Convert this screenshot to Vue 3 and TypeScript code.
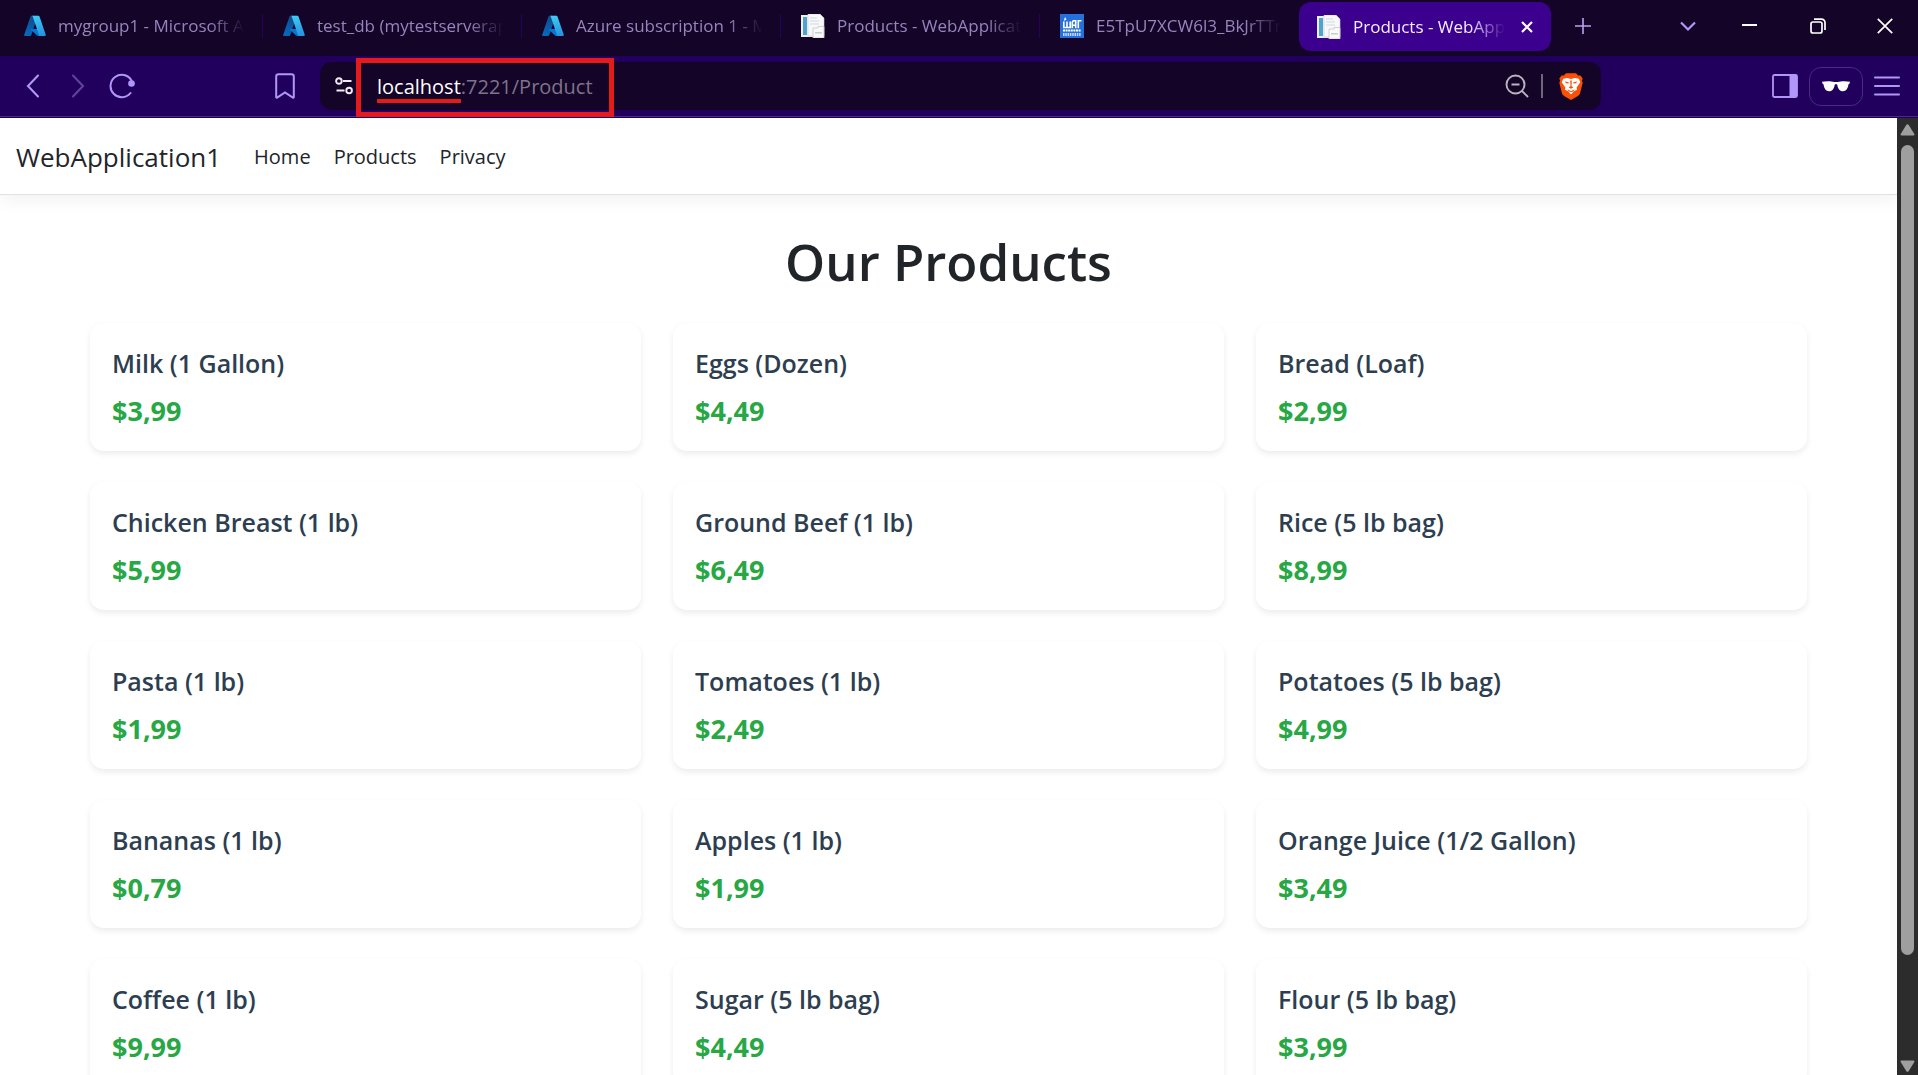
<script setup lang="ts">
interface Tab {
  title: string
  icon: 'azure' | 'doc' | 'step'
  active?: boolean
}

interface Product {
  name: string
  price: string
}

const tabs: Tab[] = [
  { title: 'mygroup1 - Microsoft A', icon: 'azure' },
  { title: 'test_db (mytestserverap', icon: 'azure' },
  { title: 'Azure subscription 1 - M', icon: 'azure' },
  { title: 'Products - WebApplicat', icon: 'doc' },
  { title: 'E5TpU7XCW6l3_BkJrTTr', icon: 'step' },
  { title: 'Products - WebApp', icon: 'doc', active: true },
]

const links: string[] = ['Home', 'Products', 'Privacy']

const products: Product[] = [
  { name: 'Milk (1 Gallon)', price: '$3,99' },
  { name: 'Eggs (Dozen)', price: '$4,49' },
  { name: 'Bread (Loaf)', price: '$2,99' },
  { name: 'Chicken Breast (1 lb)', price: '$5,99' },
  { name: 'Ground Beef (1 lb)', price: '$6,49' },
  { name: 'Rice (5 lb bag)', price: '$8,99' },
  { name: 'Pasta (1 lb)', price: '$1,99' },
  { name: 'Tomatoes (1 lb)', price: '$2,49' },
  { name: 'Potatoes (5 lb bag)', price: '$4,99' },
  { name: 'Bananas (1 lb)', price: '$0,79' },
  { name: 'Apples (1 lb)', price: '$1,99' },
  { name: 'Orange Juice (1/2 Gallon)', price: '$3,49' },
  { name: 'Coffee (1 lb)', price: '$9,99' },
  { name: 'Sugar (5 lb bag)', price: '$4,49' },
  { name: 'Flour (5 lb bag)', price: '$3,99' },
]
</script>

<template>
  <div class="window">
    <div class="tabstrip">
      <div v-for="(tab, i) in tabs" :key="i" class="tab" :class="{ active: tab.active }">
        <svg v-if="tab.icon === 'azure'" class="favicon" viewBox="0 0 22 22" aria-hidden="true">
          <defs>
            <linearGradient :id="'azl' + i" x1="0.6" y1="0" x2="0.3" y2="1">
              <stop offset="0" stop-color="#114a8b" />
              <stop offset="1" stop-color="#0669bc" />
            </linearGradient>
            <linearGradient :id="'azr' + i" x1="0.4" y1="0" x2="0.6" y2="1">
              <stop offset="0" stop-color="#3ccbf4" />
              <stop offset="1" stop-color="#2892df" />
            </linearGradient>
          </defs>
          <path d="M7.5 .8h6.3L7.3 20.1a1.1 1.1 0 0 1-1 .8H1.300a1 1 0 0 1-1-1.400L6.500 1.500a1.100 1.100 0 0 1 1-.700z" :fill="`url(#azl${i})`" />
          <path d="M16.500 13.900H7.100a.5.500 0 0 0-.3.800l6.200 5.700a1 1 0 0 0 .7.300h5.200z" fill="#0078d4" />
          <path d="M15.500 1.500a1.100 1.100 0 0 0-1-.700H7.700a1.100 1.100 0 0 1 1 .7l6.100 18a1.100 1.100 0 0 1-1 1.400h6.900a1.100 1.100 0 0 0 1-1.400z" :fill="`url(#azr${i})`" />
        </svg>
        <svg v-else-if="tab.icon === 'doc'" class="favicon wide" viewBox="0 0 24 24" aria-hidden="true">
          <path d="M0 1h18v22H0z" fill="#eef1f3" />
          <path d="M2 3h4v18H2z" fill="#4fa3cf" />
          <path d="M7 0h12l4 4v18H7z" fill="#f7f8f9" stroke="#c9cdd1" stroke-width=".6" />
          <path d="M9 4h7M9 7h9M9 10h9" stroke="#d3dae0" stroke-width="1" />
          <path d="M12 14h5v-1.500h6V24H12z" fill="#fafafa" stroke="#c6c6c6" stroke-width=".8" />
          <path d="M14 18h7v1.500h-7z" fill="#c8ced3" />
        </svg>
        <svg v-else class="favicon wide" viewBox="0 0 24 24" aria-hidden="true">
          <path d="M0 0h24v24H0z" fill="#2670dc" />
          <path d="M3.800 7.500v6h6.400v-6M7 7.500v6M12.300 14.300V8.300l1-1.500h2.400v7.500M12.300 11.300h3.400M18.300 14.300V6.800h3.200" fill="none" stroke="#fff" stroke-width="1.600" />
          <path d="M5 3l1.500 2.500L3.800 7z" fill="#fff" />
          <path d="M3 16.500h18" stroke="#fff" stroke-width="2" stroke-dasharray="2 .6" />
          <path d="M3 20.500h18" stroke="#c4dbf8" stroke-width="3" stroke-dasharray="1.500 .8" />
        </svg>
        <span class="tab-title">{{ tab.title }}</span>
        <button v-if="tab.active" class="plain tab-close" aria-label="Close tab">
          <svg width="12" height="12" viewBox="0 0 12 12"><path d="M1 1l10 10M11 1L1 11" stroke="#fff" stroke-width="2.200" /></svg>
        </button>
      </div>
      <button class="plain new-tab" aria-label="New tab">
        <svg width="16" height="16" viewBox="0 0 16 16"><path d="M8 0v16M0 8h16" stroke="#b9a3f2" stroke-width="1.600" /></svg>
      </button>
      <div class="window-controls">
        <button class="plain" aria-label="Search tabs">
          <svg width="16" height="16" viewBox="0 0 16 16"><path d="M1 4.500l7 7 7-7" fill="none" stroke="#b196fa" stroke-width="2.200" /></svg>
        </button>
        <button class="plain" aria-label="Minimize">
          <svg width="16" height="16" viewBox="0 0 16 16"><path d="M0 7h15" stroke="#fff" stroke-width="2" /></svg>
        </button>
        <button class="plain" aria-label="Restore">
          <svg width="16" height="16" viewBox="0 0 16 16" fill="none" stroke="#fff" stroke-width="1.700"><rect x="1" y="4" width="11" height="11" rx="2" /><path d="M4 1.200h7.500a3.500 3.500 0 0 1 3.500 3.500V12" /></svg>
        </button>
        <button class="plain" aria-label="Close window">
          <svg width="16" height="16" viewBox="0 0 16 16"><path d="M.8.8l14.400 14.400M15.200.8L.8 15.200" stroke="#fff" stroke-width="1.700" /></svg>
        </button>
      </div>
    </div>

    <div class="toolbar">
      <div class="nav-buttons">
        <button class="plain back" aria-label="Back">
          <svg width="14" height="24" viewBox="0 0 14 24"><path d="M12 1.500L2 12l10 10.500" fill="none" stroke="#b196fa" stroke-width="2.100" stroke-linecap="round" /></svg>
        </button>
        <button class="plain forward" aria-label="Forward">
          <svg width="14" height="24" viewBox="0 0 14 24"><path d="M2 1.500L12 12 2 22.500" fill="none" stroke="#62409e" stroke-width="2.100" stroke-linecap="round" /></svg>
        </button>
        <button class="plain" aria-label="Reload">
          <svg width="26" height="26" viewBox="0 0 26 26"><path d="M21.500 20a11.200 11.200 0 1 1 1-12.500" fill="none" stroke="#b196fa" stroke-width="2" stroke-linecap="round" /><circle cx="22.500" cy="10.500" r="3.300" fill="#b196fa" /></svg>
        </button>
      </div>
      <button class="plain bookmark" aria-label="Bookmark this page">
        <svg width="20" height="26" viewBox="0 0 20 26"><path d="M3.500 1.200h13a2.300 2.300 0 0 1 2.300 2.300v20.600c0 .6-.4.800-.9.500L10 19.500l-7.900 5.100c-.5.300-.9.100-.9-.5V3.500a2.300 2.300 0 0 1 2.300-2.300z" fill="none" stroke="#b196fa" stroke-width="2" /></svg>
      </button>
      <div class="omnibox">
        <button class="plain site-info" aria-label="Site information">
          <svg width="18" height="18" viewBox="0 0 18 18" fill="none" stroke="#f1edf7" stroke-width="1.900"><circle cx="3.900" cy="4" r="2.800" /><path d="M8 4h8.500M1.500 13.500h8" /><circle cx="14.100" cy="13.500" r="2.800" /></svg>
        </button>
        <div class="address">
          <label class="host" for="address">localhost</label>
          <input id="address" class="path" type="text" value=":7221/Product" />
        </div>
        <div class="omnibox-tools">
          <button class="plain" aria-label="Zoom">
            <svg width="24" height="24" viewBox="0 0 24 24" fill="none" stroke="#b9b4bf" stroke-width="1.900"><circle cx="10.500" cy="10.500" r="9" /><path d="M6.500 10.500h8M17 17l6 6" /></svg>
          </button>
          <span class="divider"></span>
          <button class="plain" aria-label="Brave Shields">
            <svg width="24" height="27" viewBox="0 0 24 27">
              <path d="M7 .3h10l2.200 2.300 2.300-.2 2.200 3.200-.8 2.200.8 2-2.600 10.200c-.4 1.400-1 2.100-2.200 3L12 27l-6.900-4c-1.200-.9-1.800-1.600-2.200-3L.3 9.800l.8-2-.8-2.200 2.200-3.200 2.300.2z" fill="#fb5006" />
              <path d="M4.200 5.800l4-.8 3.800.9 3.800-.9 4 .8 1.500 3.400-3.800 5.500.6 2-3.200 1.500L12 21.500l-2.900-3.300L5.900 16.700l.6-2L2.700 9.200z" fill="#fff" />
              <path d="M5.800 8.600l4 .7-.4 1.100-2.400-.1zM18.200 8.600l-4 .7.400 1.100 2.400-.1zM11.200 7.500h1.600l-.3 5.500 1.800 1.400-2.300 1.400-2.300-1.400 1.800-1.400zM8.500 16.300l3.500 1.900 3.500-1.900-1 1.900-2.500 1-2.500-1z" fill="#fb5006" />
            </svg>
          </button>
        </div>
      </div>
      <div class="side-tools">
        <button class="plain" aria-label="Side panel">
          <svg width="26" height="24" viewBox="0 0 26 24"><rect x="1" y="1" width="24" height="22" rx="1.500" fill="none" stroke="#b196fa" stroke-width="1.800" /><path d="M17.500 1H25v22h-7.500z" fill="#b196fa" /></svg>
        </button>
        <button class="plain private" aria-label="Private window">
          <svg width="28" height="11" viewBox="0 0 28 11"><path d="M0 .8C4-.1 9 0 12.200 1h3.600C19 0 24-.1 28 .8l-.7 2.200-.8.300c-.5 3.200-1.300 5-3 6.300-2 1-4.500.8-6-.7-1.300-1.500-2-3.200-2.200-5.200-.5-.5-2.100-.5-2.600 0-.2 2-.9 3.700-2.200 5.200-1.500 1.500-4 1.700-6 .7-1.700-1.300-2.500-3.100-3-6.300L.7 3z" fill="#fff" /></svg>
        </button>
        <button class="plain" aria-label="Menu">
          <svg width="26" height="20" viewBox="0 0 26 20"><path d="M1 1.500h24M1 10h24M1 18.500h24" stroke="#b196fa" stroke-width="2" stroke-linecap="round" /></svg>
        </button>
      </div>
    </div>

    <div class="viewport">
      <div class="page">
        <header class="navbar">
          <a class="brand" href="#">WebApplication1</a>
          <nav>
            <a v-for="link in links" :key="link" href="#">{{ link }}</a>
          </nav>
        </header>
        <main>
          <h1>Our Products</h1>
          <div class="grid">
            <article v-for="product in products" :key="product.name" class="card">
              <h2>{{ product.name }}</h2>
              <p>{{ product.price }}</p>
            </article>
          </div>
        </main>
      </div>
      <div class="scrollbar" aria-hidden="true">
        <svg width="15" height="12" viewBox="0 0 15 12"><path d="M1.500 11.500h12c.9 0 1.200-.8.8-1.500L8.600.8c-.5-.8-1.700-.8-2.200 0L.7 10c-.4.700-.1 1.500.8 1.500z" fill="#9f9f9f" /></svg>
        <div class="track"><div class="thumb"></div></div>
        <svg width="15" height="12" viewBox="0 0 15 12"><path d="M1.500.5h12c.9 0 1.200.8.800 1.500l-5.700 9.200c-.5.800-1.700.8-2.200 0L.7 2C.3 1.300.6.5 1.500.5z" fill="#9f9f9f" /></svg>
      </div>
    </div>
  </div>
</template>

<style>
body {
  margin: 0;
  overflow: hidden;
}
</style>

<style scoped>
.window {
  display: flex;
  flex-direction: column;
  height: 100vh;
  font-family: "Open Sans", "Noto Sans", sans-serif;
  background: #fff;
}

.window * {
  box-sizing: border-box;
}

svg {
  display: block;
  flex: none;
}

.plain {
  display: flex;
  align-items: center;
  justify-content: center;
  flex: none;
  margin: 0;
  padding: 0;
  border: 0;
  background: none;
}

/* Tab strip */
.tabstrip {
  display: flex;
  flex: none;
  height: 56px;
  padding-left: 4px;
  background: #140427;
}

.tab {
  display: flex;
  align-items: center;
  gap: 12px;
  flex: 0 1 259px;
  min-width: 0;
  height: 52px;
  padding: 0 14px 0 20px;
  color: #9685bd;
  font-size: 17px;
  line-height: 24px;
  background: linear-gradient(#24005f, #24005f) right center / 1px 24px no-repeat;
}

.tab:nth-child(5) {
  background: none;
}

.tab.active {
  flex-basis: 252px;
  height: 49px;
  margin-top: 2px;
  padding: 0 18px;
  border-radius: 12px;
  color: #f3edff;
  background: #3c008f;
}

.favicon {
  width: 22px;
  height: 22px;
}

.favicon.wide {
  width: 24px;
  height: 24px;
}

.tab-title {
  flex: 1;
  min-width: 0;
  overflow: hidden;
  white-space: nowrap;
  mask-image: linear-gradient(to left, transparent 4px, #000 40px);
}

.new-tab {
  width: 64px;
  height: 52px;
}

.window-controls {
  display: flex;
  height: 52px;
  margin-left: auto;
}

.window-controls .plain {
  width: 68px;
}

.window-controls .plain:first-child {
  width: 56px;
}

.window-controls .plain:last-child {
  width: 66px;
}

/* Toolbar */
.toolbar {
  display: flex;
  align-items: center;
  flex: none;
  height: 62px;
  padding: 0 18px 2px 26px;
  background: #20005c;
  box-shadow: inset 0 -1px #20005c, inset 0 -2px #4b2a86;
}

.nav-buttons {
  display: flex;
  align-items: center;
  gap: 24px;
  width: 249px;
}

.nav-buttons .forward {
  margin-left: 7px;
}

.bookmark {
  margin-right: 25px;
}

.omnibox {
  display: flex;
  align-items: center;
  flex: 1;
  height: 48px;
  padding: 0 18px 0 15px;
  border-radius: 12px;
  background: #140427;
}

.address {
  position: relative;
  display: flex;
  align-items: center;
  width: 258px;
  height: 59px;
  margin: 2px 0 0 3px;
  padding-left: 21px;
  font-size: 20px;
  line-height: 28px;
}

/* Red marker frame laid over the address */
.address::after {
  content: "";
  position: absolute;
  inset: 0;
  border: 5px solid #e61a1a;
  pointer-events: none;
}

.host {
  padding-top: 4px;
  border-bottom: 4px solid #e61a1a;
  line-height: 24px;
  color: #fff;
}

.path {
  flex: 1;
  min-width: 0;
  margin-right: 8px;
  padding: 0;
  border: 0;
  outline: 0;
  font: inherit;
  color: #7d748b;
  background: none;
}

.omnibox-tools {
  display: flex;
  align-items: center;
  gap: 12px;
  margin-left: auto;
}

.divider {
  width: 2px;
  height: 24px;
  margin-right: 4px;
  background: #6e667b;
}

.side-tools {
  display: flex;
  align-items: center;
  gap: 11px;
  margin-left: 171px;
}

.private {
  width: 54px;
  height: 39px;
  border: 1px solid #4b2a86;
  border-radius: 12px;
}

/* Page */
.viewport {
  display: flex;
  flex: 1;
  min-height: 0;
}

.page {
  flex: 1;
  min-width: 0;
  overflow: hidden;
}

.navbar {
  display: flex;
  align-items: center;
  gap: 33px;
  height: 77px;
  padding: 2px 16px 0;
  border-bottom: 1px solid #dee2e6;
  box-shadow: 0 6px 16px rgba(0, 0, 0, 0.05);
}

.navbar a {
  color: #212529;
  text-decoration: none;
}

.navbar .brand {
  font-size: 26px;
  line-height: 40px;
}

nav {
  display: flex;
  gap: 23px;
  font-size: 20px;
  line-height: 32px;
}

main {
  padding: 33px 90px;
}

h1 {
  margin: 0 0 29px;
  font-size: 51px;
  font-weight: 600;
  line-height: 66px;
  text-align: center;
  color: #212529;
}

.grid {
  display: grid;
  grid-template-columns: repeat(3, 1fr);
  gap: 31px 32px;
}

.card {
  padding: 22px 22px 20px;
  border-radius: 14px;
  background: #fff;
  box-shadow: 0 3px 6px rgba(0, 0, 0, 0.08);
}

.card h2 {
  margin: 0 0 10px;
  font-size: 25px;
  font-weight: 600;
  line-height: 36px;
  color: #2c3e50;
}

.card p {
  margin: 0;
  font-size: 27px;
  font-weight: 700;
  line-height: 40px;
  color: #28a745;
}

.scrollbar {
  display: flex;
  flex-direction: column;
  align-items: center;
  flex: none;
  width: 21px;
  padding: 6px 0 3px;
  background: #2c2c2c;
}

.track {
  flex: 1;
  width: 13px;
  margin: 9px 0 5px;
}

.thumb {
  height: 89%;
  border-radius: 7px;
  background: #9f9f9f;
}
</style>
